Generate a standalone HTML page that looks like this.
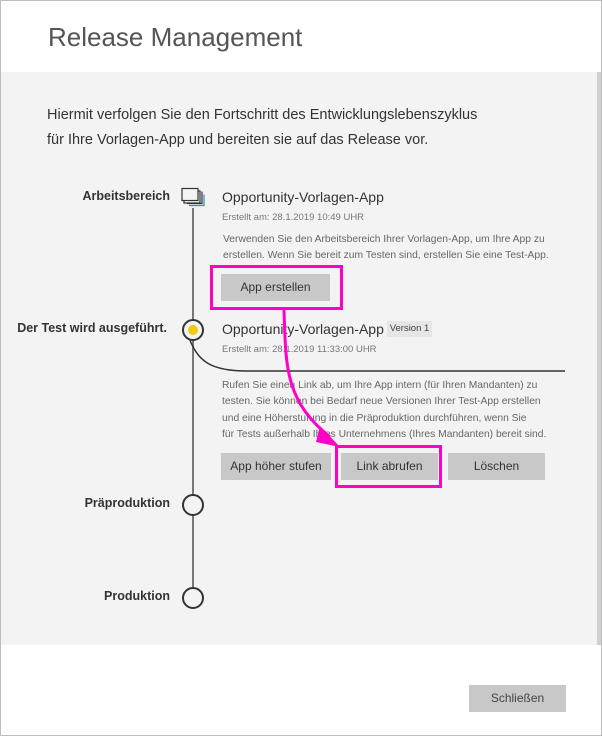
<!DOCTYPE html>
<html><head><meta charset="utf-8"><style>
*{margin:0;padding:0;box-sizing:border-box}
body{width:602px;height:736px;overflow:hidden;background:#fff;font-family:"Liberation Sans",sans-serif;position:relative}
.a{position:absolute;white-space:nowrap}
.frame{position:absolute;left:0;top:0;width:602px;height:736px;border:1px solid #bdbdbd}
.gray{position:absolute;left:1px;top:72px;width:596px;height:573px;background:#f3f3f3}
.lbl{font-weight:bold;font-size:12.5px;color:#333;text-align:right;width:170px;left:0}
.t{font-size:14px;color:#333}
.s{font-size:9.5px;color:#777}
.d{font-size:10.3px;color:#666;line-height:16.3px}
.btn{position:absolute;background:#c8c8c8;color:#333;font-size:12px;text-align:center;line-height:27px;height:27px}
.pk{position:absolute;border:3px solid #ff00c8}
.circ{position:absolute;width:22px;height:22px;border:2px solid #333;border-radius:50%;background:#f3f3f3}
</style></head><body>
<div class="gray"></div>
<div style="position:absolute;left:597px;top:72px;width:4px;height:573px;background:#cfcfcf"></div>
<div class="frame"></div>
<div class="a" style="left:48px;top:22px;font-size:26px;color:#555">Release Management</div>
<div class="a" style="left:47px;top:103px;font-size:14.5px;color:#333;line-height:24.5px">Hiermit verfolgen Sie den Fortschritt des Entwicklungslebenszyklus<br>für Ihre Vorlagen-App und bereiten sie auf das Release vor.</div>

<div style="position:absolute;left:192px;top:208px;width:2px;height:380px;background:#777"></div>
<svg class="a" style="left:180px;top:186px" width="26" height="24"><rect x="4" y="5" width="16" height="12" fill="#f3f3f3" stroke="#333" stroke-width="1.2"/><rect x="2" y="2.5" width="16" height="12" fill="#f3f3f3" stroke="#333" stroke-width="1.2"/><path d="M7 17.5h15v-12" fill="none" stroke="#333" stroke-width="1.2"/><path d="M9 19.5h15v-11" fill="none" stroke="#4a7fc0" stroke-width="1.2"/></svg>
<div class="a lbl" style="top:189px">Arbeitsbereich</div>
<div class="a t" style="left:222px;top:189px">Opportunity-Vorlagen-App</div>
<div class="a s" style="left:222px;top:212px">Erstellt am: 28.1.2019 10:49 UHR</div>
<div class="a d" style="left:223px;top:232px">Verwenden Sie den Arbeitsbereich Ihrer Vorlagen-App, um Ihre App zu<br>erstellen. Wenn Sie bereit zum Testen sind, erstellen Sie eine Test-App.</div>
<div class="btn" style="left:221px;top:274px;width:109px">App erstellen</div>
<div class="pk" style="left:210px;top:265px;width:133px;height:45px"></div>

<svg class="a" style="left:180px;top:316px" width="400" height="60"><path d="M9 22 C18 45 30 55 67 55 H385" fill="none" stroke="#333" stroke-width="1.5"/></svg>
<div class="circ" style="left:182px;top:319px"></div>
<div class="a" style="left:188px;top:325px;width:10px;height:10px;border-radius:50%;background:#f2c811"></div>
<div class="a lbl" style="top:321px;left:-3px">Der Test wird ausgeführt.</div>
<div class="a t" style="left:222px;top:321px">Opportunity-Vorlagen-App</div>
<div class="a" style="left:387px;top:321px;width:45px;height:16px;background:#e6e6e6;font-size:9.5px;color:#444;text-align:center;line-height:16px">Version 1</div>
<div class="a s" style="left:222px;top:344px">Erstellt am: 28.1.2019 11:33:00 UHR</div>
<div class="a d" style="left:222px;top:378px">Rufen Sie einen Link ab, um Ihre App intern (für Ihren Mandanten) zu<br>testen. Sie können bei Bedarf neue Versionen Ihrer Test-App erstellen<br>und eine Höherstufung in die Präproduktion durchführen, wenn Sie<br>für Tests außerhalb Ihres Unternehmens (Ihres Mandanten) bereit sind.</div>
<div class="btn" style="left:221px;top:453px;width:110px">App höher stufen</div>
<div class="btn" style="left:341px;top:453px;width:97px">Link abrufen</div>
<div class="btn" style="left:448px;top:453px;width:97px">Löschen</div>
<div class="pk" style="left:335px;top:445px;width:107px;height:43px"></div>
<svg class="a" style="left:270px;top:305px" width="80" height="150"><path d="M14 5 C16 60 14 95 60 132" fill="none" stroke="#ff00c8" stroke-width="3"/><path d="M50 121 L70 142 L46 137 Z" fill="#ff00c8"/></svg>

<div class="circ" style="left:182px;top:494px"></div>
<div class="a lbl" style="top:496px">Präproduktion</div>
<div class="circ" style="left:182px;top:587px"></div>
<div class="a lbl" style="top:589px">Produktion</div>

<div class="btn" style="left:469px;top:685px;width:97px;font-size:12px;color:#444">Schließen</div>
</body></html>
